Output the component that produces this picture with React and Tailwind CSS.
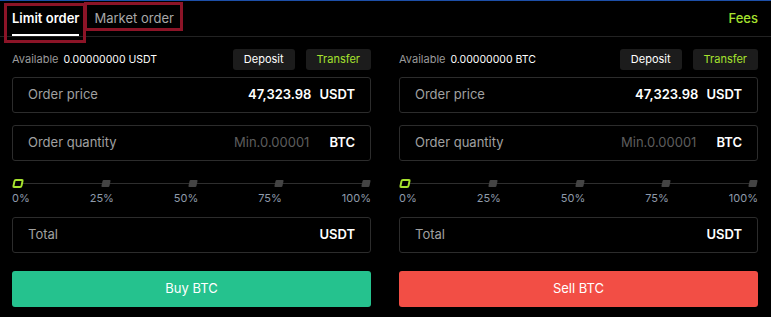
import React from 'react';

const font = { fontFamily: 'Inter, "Noto Sans", sans-serif' };

function Field({ label, value, hint, unit }) {
  return (
    <div className="flex items-center h-[36px] border border-[#2c2c2c] rounded-[3px] px-[15px]">
      <span className="text-[13px] text-[#a0a0a0]">{label}</span>
      <div className="ml-auto flex items-center">
        {hint && <span className="text-[13px] text-[#5d5d5d] mr-[20px]">{hint}</span>}
        {value && <span className="text-[13px] font-semibold text-white mr-[8px]">{value}</span>}
        <span className="text-[13px] font-semibold text-white">{unit}</span>
      </div>
    </div>
  );
}

function Slider() {
  const marks = ['0%', '25%', '50%', '75%', '100%'];
  return (
    <div className="mt-[17px]">
      <div className="relative h-[10px] flex items-center justify-between px-[1px]">
        <div className="absolute left-[8px] right-[4px] top-1/2 h-px bg-[#2e2e2e]" />
        {marks.map((m, i) =>
          i === 0 ? (
            <div key={m} className="relative w-[10px] h-[9px] border-2 border-[#a6e22e] bg-black rounded-[2px] -skew-x-12" />
          ) : (
            <div key={m} className="relative w-[8px] h-[7px] bg-[#444] rounded-[1px] -skew-x-12" />
          )
        )}
      </div>
      <div className="flex justify-between mt-[2px]">
        {marks.map((m) => (
          <span key={m} className="text-[11px] text-[#8f9bab]">{m}</span>
        ))}
      </div>
    </div>
  );
}

function Panel({ balance, unit, priceUnit, qtyUnit, action, color }) {
  return (
    <div className="flex-1 flex flex-col">
      <div className="flex items-center h-[21px] mt-[12px]">
        <span className="text-[11px] text-[#9a9a9a]">Available</span>
        <span className="text-[10.5px] text-white ml-[5px]">{balance} {unit}</span>
        <div className="ml-auto flex gap-[11px]">
          <button className="h-[21px] px-[11px] rounded-[3px] bg-[#1c1c1c] text-[11px] text-white">Deposit</button>
          <button className="h-[21px] px-[11px] rounded-[3px] bg-[#1c1c1c] text-[11px] text-[#a6e22e]">Transfer</button>
        </div>
      </div>
      <div className="mt-[7px]">
        <Field label="Order price" value="47,323.98" unit={priceUnit} />
      </div>
      <div className="mt-[12px]">
        <Field label="Order quantity" hint="Min.0.00001" unit={qtyUnit} />
      </div>
      <Slider />
      <div className="mt-[10px]">
        <Field label="Total" unit="USDT" />
      </div>
      <button className={`mt-[18px] h-[36px] rounded-[3px] text-[13px] text-white ${color}`}>{action}</button>
    </div>
  );
}

export default function App() {
  return (
    <div className="relative w-[771px] h-[317px] bg-black overflow-hidden" style={font}>
      <div className="h-px bg-[#1d4fa8]" />
      {/* Tabs */}
      <div className="flex items-end h-[36px] border-b border-[#222] px-[12px]">
        <div className="flex flex-col mr-[15px]">
          <span className="text-[13px] font-semibold text-white leading-none pb-[9px]">Limit order</span>
          <div className="h-[2px] bg-white" />
        </div>
        <span className="text-[13px] text-[#a8a8a8] leading-none pb-[11px]">Market order</span>
        <span className="ml-auto text-[13px] font-medium text-[#a6e22e] leading-none pb-[11px] mr-[1px]">Fees</span>
      </div>
      {/* Annotation boxes */}
      <div className="absolute left-[4px] top-[3px] w-[82px] h-[40px] border-[3px] border-[#8c1427] pointer-events-none" />
      <div className="absolute left-[84px] top-[2px] w-[99px] h-[29px] border-[3px] border-[#8c1427] pointer-events-none" />
      {/* Panels */}
      <div className="flex gap-[28px] pl-[12px] pr-[13px]">
        <Panel balance="0.00000000" unit="USDT" priceUnit="USDT" qtyUnit="BTC" action="Buy BTC" color="bg-[#25c28e]" />
        <Panel balance="0.00000000" unit="BTC" priceUnit="USDT" qtyUnit="BTC" action="Sell BTC" color="bg-[#f24e45]" />
      </div>
    </div>
  );
}
